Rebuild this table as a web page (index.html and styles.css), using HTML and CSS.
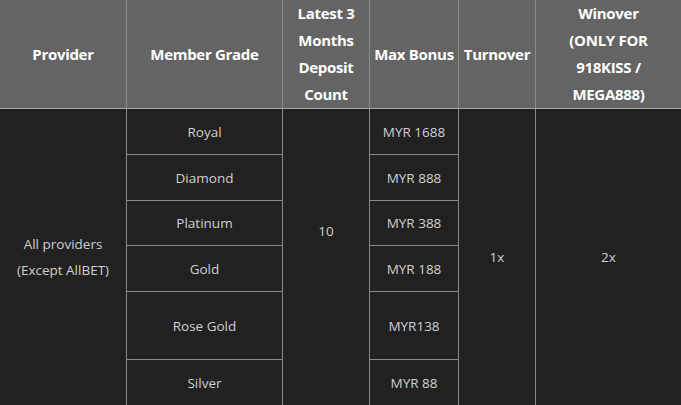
FILE: index.html
```html
<!DOCTYPE html>
<html>
<head>
<meta charset="utf-8">
<link rel="stylesheet" href="styles.css">
</head>
<body>
<table class="bonus">
  <colgroup>
    <col class="c1"><col class="c2"><col class="c3"><col class="c4"><col class="c5"><col class="c6">
  </colgroup>
  <thead>
    <tr>
      <th>Provider</th>
      <th>Member Grade</th>
      <th>Latest 3 Months Deposit Count</th>
      <th>Max Bonus</th>
      <th>Turnover</th>
      <th class="wide">Winover (ONLY FOR 918KISS / MEGA888)</th>
    </tr>
  </thead>
  <tbody>
    <tr class="r1">
      <td rowspan="6">All providers<br>(Except AllBET)</td>
      <td>Royal</td>
      <td rowspan="6" class="count">10</td>
      <td>MYR 1688</td>
      <td rowspan="6">1x</td>
      <td rowspan="6">2x</td>
    </tr>
    <tr class="r2"><td>Diamond</td><td>MYR 888</td></tr>
    <tr class="r3"><td>Platinum</td><td>MYR 388</td></tr>
    <tr class="r4"><td>Gold</td><td>MYR 188</td></tr>
    <tr class="r5"><td>Rose Gold</td><td>MYR138</td></tr>
    <tr class="r6"><td>Silver</td><td>MYR 88</td></tr>
  </tbody>
</table>
</body>
</html>
```
FILE: styles.css
```css
html, body {
  margin: 0;
  padding: 0;
  background: #212121;
  overflow: hidden;
}
.bonus {
  table-layout: fixed;
  border-collapse: separate;
  border-spacing: 0;
  width: 682px;
  font-family: "Open Sans", "Liberation Sans", sans-serif;
}
.c1 { width: 127px; }
.c2 { width: 156px; }
.c3 { width: 87px; }
.c4 { width: 89px; }
.c5 { width: 77px; }
.c6 { width: 146px; }
.bonus th, .bonus td {
  box-sizing: border-box;
  padding: 0;
  text-align: center;
  vertical-align: middle;
  border-right: 1px solid #8a8a8a;
  border-bottom: 1px solid #8a8a8a;
}
.bonus th {
  background: #646464;
  color: #ffffff;
  font-weight: 700;
  font-size: 15px;
  line-height: 27px;
  height: 109px;
  padding: 0 2px;
  letter-spacing: -0.3px;
  border-bottom-color: #a8a8a8;
}
.bonus th.wide { padding: 0 22px; }
.bonus td {
  background: #212121;
  color: #d0d0d0;
  font-size: 13.5px;
  line-height: 26px;
}
.bonus td.count { padding-bottom: 52px; }
.r1 td { height: 46px; }
.r2 td { height: 46px; }
.r3 td { height: 45px; }
.r4 td { height: 46px; }
.r5 td { height: 68px; }
.r6 td { height: 46px; }
.bonus td[rowspan] { height: auto; }
```
